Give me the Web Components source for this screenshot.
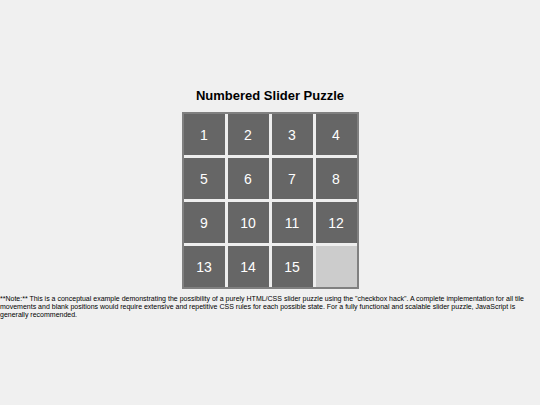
<!DOCTYPE html>
<html lang="en">
<head>
<meta charset="UTF-8">
<meta name="viewport" content="width=device-width, initial-scale=1.0">
<title>Numbered Slider Puzzle</title>
<style>
  body {
    margin: 0;
    min-height: 100vh;
    display: flex;
    background-color: #f0f0f0;
    font-family: "Liberation Sans", Arial, sans-serif;
  }
</style>
</head>
<body>
<puzzle-page>
  <span slot="title">Numbered Slider Puzzle</span>
  <slider-puzzle size="4"></slider-puzzle>
  <span slot="note">**Note:** This is a conceptual example demonstrating the possibility of a purely HTML/CSS slider puzzle using the "checkbox hack". A complete implementation for all tile movements and blank positions would require extensive and repetitive CSS rules for each possible state. For a fully functional and scalable slider puzzle, JavaScript is generally recommended.</span>
</puzzle-page>

<script>
class PuzzlePage extends HTMLElement {
  constructor() {
    super();
    this.attachShadow({ mode: "open" });
    this.shadowRoot.innerHTML = `
      <style>
        :host {
          flex: 1;
          display: flex;
          flex-direction: column;
          align-items: center;
          justify-content: center;
          padding-top: 2px;
        }
        h1 {
          margin: 0 0 8px;
          font-size: 13px;
          line-height: 16px;
          color: #000;
        }
        p {
          margin: 6px 0 0;
          font-size: 7px;
          line-height: 8px;
          color: #000;
        }
      </style>
      <h1><slot name="title"></slot></h1>
      <slot></slot>
      <p><slot name="note"></slot></p>
    `;
  }
}

class PuzzleTile extends HTMLElement {
  constructor() {
    super();
    this.attachShadow({ mode: "open" });
    this.shadowRoot.innerHTML = `
      <style>
        :host {
          display: block;
        }
        button {
          display: block;
          width: 100%;
          height: 100%;
          margin: 0;
          padding: 0;
          border: 0;
          background-color: #666;
          color: #fff;
          font-family: inherit;
          font-size: 14px;
          line-height: 16px;
          cursor: pointer;
        }
        :host([blank]) {
          background-color: #ccc;
        }
        :host([blank]) button {
          display: none;
        }
      </style>
      <button type="button"><slot></slot></button>
    `;
  }
}

class SliderPuzzle extends HTMLElement {
  constructor() {
    super();
    this.attachShadow({ mode: "open" });
  }

  connectedCallback() {
    this._size = parseInt(this.getAttribute("size")) || 4;
    this._tiles = [];
    for (let i = 1; i < this._size * this._size; i++) {
      this._tiles.push(i);
    }
    this._tiles.push(0); // 0 is the blank
    this.render();
  }

  render() {
    this.shadowRoot.innerHTML = `
      <style>
        :host {
          display: grid;
          grid-template-columns: repeat(${this._size}, 41px);
          grid-auto-rows: 41px;
          gap: 3px;
          border: 2px solid #808080;
          background-color: #eee;
        }
      </style>
      ${this._tiles
        .map((n) => (n ? `<puzzle-tile>${n}</puzzle-tile>` : `<puzzle-tile blank></puzzle-tile>`))
        .join("")}
    `;
    this.shadowRoot.querySelectorAll("puzzle-tile").forEach((tile, index) => {
      tile.addEventListener("click", () => this.move(index));
    });
  }

  // Swap a tile with the blank when they are neighbours
  move(index) {
    const blank = this._tiles.indexOf(0);
    const rows = Math.abs(Math.floor(index / this._size) - Math.floor(blank / this._size));
    const cols = Math.abs((index % this._size) - (blank % this._size));
    if (rows + cols !== 1) return;
    this._tiles[blank] = this._tiles[index];
    this._tiles[index] = 0;
    this.render();
  }
}

customElements.define("puzzle-page", PuzzlePage);
customElements.define("puzzle-tile", PuzzleTile);
customElements.define("slider-puzzle", SliderPuzzle);
</script>
</body>
</html>
